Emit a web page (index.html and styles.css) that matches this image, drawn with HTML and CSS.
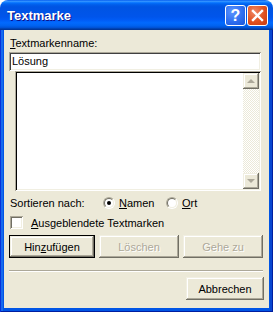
FILE: index.html
```
<!DOCTYPE html>
<html>
<head>
    <title>Textmarke</title>
    <link rel="stylesheet" href="styles.css">
</head>
<body>
    <div class="window">
        <div class="titlebar">
            <span class="title">Textmarke</span>
            <div class="caption-buttons">
                <span class="cap-btn help">?</span>
                <span class="cap-btn close">
                    <svg width="19" height="19" viewBox="0 0 19 19">
                        <path d="M5 5 L14 14 M14 5 L5 14" stroke="#fff" stroke-width="2.4" stroke-linecap="square"/>
                    </svg>
                </span>
            </div>
        </div>
        <div class="frame">
            <div class="client">
                <label class="lbl"><u>T</u>extmarkenname:</label>
                <div class="edit">Lösung</div>
                <div class="listbox">
                    <div class="list-area"></div>
                    <div class="vscroll">
                        <div class="sb-btn"><span class="arrow-up"></span></div>
                        <div class="sb-track"></div>
                        <div class="sb-btn"><span class="arrow-down"></span></div>
                    </div>
                </div>
                <div class="sort-row">
                    <span class="sort-label">Sortieren nach:</span>
                    <span class="radio-opt first">
                        <span class="radio"><span class="radio-in"><span class="dot"></span></span></span>
                        <span><u>N</u>amen</span>
                    </span>
                    <span class="radio-opt">
                        <span class="radio"><span class="radio-in"></span></span>
                        <span><u>O</u>rt</span>
                    </span>
                </div>
                <div class="check-row">
                    <span class="checkbox"></span>
                    <span><u>A</u>usgeblendete Textmarken</span>
                </div>
                <div class="btn-row">
                    <button class="btn default"><span class="btn-face">Hin<u>z</u>ufügen</span></button>
                    <button class="btn disabled"><span class="btn-face">Löschen</span></button>
                    <button class="btn disabled"><span class="btn-face">Gehe zu</span></button>
                </div>
                <div class="separator"></div>
                <div class="bottom-row">
                    <button class="btn cancel"><span class="btn-face">Abbrechen</span></button>
                </div>
            </div>
        </div>
    </div>
</body>
</html>
```

FILE: styles.css
```
* {
    box-sizing: border-box;
}
body {
    margin: 0;
    background: #fff;
    font-family: 'Liberation Sans', Arial, sans-serif;
    font-size: 11px;
    color: #000;
}
u {
    text-decoration: underline;
    text-underline-offset: 1px;
}
.window {
    width: 273px;
    height: 312px;
    display: flex;
    flex-direction: column;
}
.titlebar {
    height: 30px;
    flex: none;
    display: flex;
    align-items: center;
    padding: 0 5px 0 7px;
    border-radius: 8px 8px 0 0;
    background: linear-gradient(to bottom, #0058ee 0%, #3593ff 4%, #288eff 6%, #127dff 8%, #036ffc 10%, #0262ee 14%, #0057e5 20%, #0054e3 24%, #0055eb 56%, #005bf5 66%, #026afe 76%, #0062ef 86%, #0052d6 92%, #0040ab 96%, #003092 100%);
}
.title {
    flex: 1;
    color: #fff;
    font-weight: bold;
    font-size: 13px;
    line-height: 15px;
    margin-top: 1px;
    text-shadow: 1px 1px #0f1089;
}
.caption-buttons {
    display: flex;
    gap: 1px;
    margin-top: 1px;
}
.cap-btn {
    width: 21px;
    height: 21px;
    border: 1px solid #fff;
    border-radius: 3px;
    display: flex;
    align-items: center;
    justify-content: center;
    color: #fff;
    font-weight: bold;
    font-size: 16px;
}
.help {
    background: radial-gradient(circle at 35% 30%, #5d95ff 0%, #2f6ff0 55%, #1a55d8 100%);
}
.close {
    background: radial-gradient(circle at 35% 30%, #f08a68 0%, #e0501f 55%, #c83a10 100%);
}
.frame {
    flex: 1;
    display: flex;
    padding: 0 4px 4px;
    background: #0055e5;
    box-shadow: inset 1px 0 #0831d9, inset -1px 0 #001ea0, inset 0 -1px #001ea0, inset 3px 0 #166aee, inset -3px 0 #0846d0;
}
.client {
    flex: 1;
    background: #ece9d8;
    display: flex;
    flex-direction: column;
    align-items: flex-start;
}
.lbl {
    display: block;
    margin: 7px 0 0 6px;
    line-height: 13px;
    height: 13px;
}
.edit {
    margin: 2px 0 0 5px;
    width: 252px;
    height: 19px;
    padding: 2px 3px;
    line-height: 15px;
    background: #fff;
    box-shadow: inset 1px 1px #aca899, inset -1px -1px #fff, inset 2px 2px #404040, inset -2px -2px #f1efe2;
}
.listbox {
    margin-left: 11px;
    width: 246px;
    height: 120px;
    padding: 2px;
    display: flex;
    background: #fff;
    box-shadow: inset 1px 1px #aca899, inset -1px -1px #fff, inset 2px 2px #000, inset -2px -2px #f1efe2;
}
.list-area {
    flex: 1;
}
.vscroll {
    width: 16px;
    display: flex;
    flex-direction: column;
}
.sb-btn {
    height: 16px;
    flex: none;
    display: flex;
    align-items: center;
    justify-content: center;
    background: #ece9d8;
    box-shadow: inset -1px -1px #716f64, inset 1px 1px #f1efe2, inset -2px -2px #aca899, inset 2px 2px #fff;
}
.sb-track {
    flex: 1;
    background: repeating-conic-gradient(#fff 0 25%, #ece9d8 0 50%) 0 0 / 2px 2px;
}
.arrow-up,
.arrow-down {
    width: 0;
    height: 0;
    border-left: 4px solid transparent;
    border-right: 4px solid transparent;
}
.arrow-up {
    border-bottom: 4px solid #aca899;
    margin-top: -1px;
}
.arrow-down {
    border-top: 4px solid #aca899;
}
.sort-row {
    margin: 5px 0 0 6px;
    height: 13px;
    display: flex;
    align-items: center;
}
.sort-label {
    width: 93px;
}
.radio-opt {
    display: flex;
    align-items: center;
    gap: 4px;
}
.radio-opt.first {
    width: 63px;
}
.radio {
    width: 12px;
    height: 12px;
    display: flex;
    border-radius: 50%;
    border: 1px solid;
    border-color: #aca899 #fff #fff #aca899;
}
.radio-in {
    flex: 1;
    display: flex;
    align-items: center;
    justify-content: center;
    border-radius: 50%;
    border: 1px solid;
    border-color: #716f64 #f1efe2 #f1efe2 #716f64;
    background: #fff;
}
.dot {
    width: 4px;
    height: 4px;
    border-radius: 50%;
    background: #000;
}
.check-row {
    margin: 7px 0 0 6px;
    height: 13px;
    display: flex;
    align-items: center;
    gap: 8px;
}
.checkbox {
    width: 13px;
    height: 13px;
    background: #fff;
    box-shadow: inset 1px 1px #aca899, inset -1px -1px #fff, inset 2px 2px #716f64, inset -2px -2px #f1efe2;
}
.btn-row {
    margin: 6px 0 0 5px;
    display: flex;
    gap: 4px;
}
.btn {
    appearance: none;
    width: 80px;
    height: 23px;
    padding: 0;
    border: none;
    background: #ece9d8;
    font: inherit;
    color: #000;
    display: flex;
}
.btn-face {
    flex: 1;
    display: flex;
    align-items: center;
    justify-content: center;
    box-shadow: inset -1px -1px #716f64, inset 1px 1px #f1efe2, inset -2px -2px #aca899, inset 2px 2px #fff;
}
.btn.default {
    width: 86px;
    border: 1px solid #000;
}
.btn.disabled {
    color: #aca899;
    text-shadow: 1px 1px #fff;
}
.btn.cancel {
    width: 78px;
}
.separator {
    margin: 12px 0 0 5px;
    width: 254px;
    height: 2px;
    border-top: 1px solid #aca899;
    border-bottom: 1px solid #fff;
}
.bottom-row {
    margin-top: 5px;
    align-self: stretch;
    display: flex;
    justify-content: flex-end;
    padding-right: 5px;
}
```
